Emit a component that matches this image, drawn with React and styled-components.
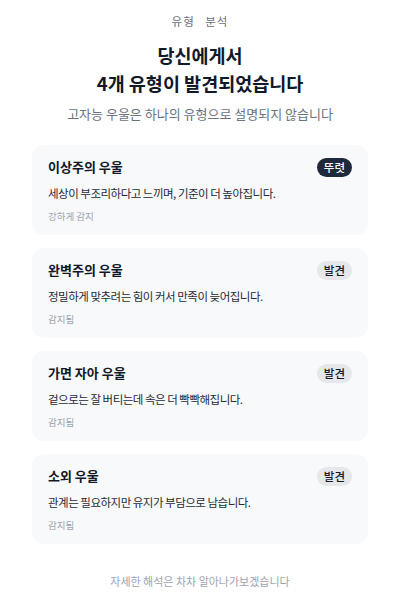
import React from "react";
import styled, { createGlobalStyle } from "styled-components";

const Global = createGlobalStyle`
  html, body { margin: 0; padding: 0; background: #ffffff; }
  body {
    font-family: "Noto Sans CJK KR", "Noto Sans", sans-serif;
    color: #111827;
  }
`;

const Page = styled.div`
  width: 400px;
  box-sizing: border-box;
  padding: 12px 32px 0;
  display: flex;
  flex-direction: column;
  align-items: center;
`;

const Eyebrow = styled.div`
  font-size: 11.5px;
  line-height: 18px;
  letter-spacing: 1px;
  word-spacing: 7px;
  color: #6b7280;
`;

const Title = styled.h1`
  margin: 11px 0 0;
  font-size: 18.5px;
  line-height: 28px;
  font-weight: 700;
  text-align: center;
  color: #111827;
`;

const Subtitle = styled.p`
  margin: 7px 0 0;
  font-size: 13px;
  line-height: 20px;
  color: #6b7280;
`;

const List = styled.div`
  margin-top: 21px;
  width: 100%;
  display: flex;
  flex-direction: column;
  gap: 13px;
`;

const Card = styled.div`
  background: #f8f9fb;
  border-radius: 12px;
  padding: 12px 16px;
  display: flex;
  flex-direction: column;
`;

const CardHead = styled.div`
  display: flex;
  align-items: center;
  justify-content: space-between;
  height: 20px;
`;

const CardTitle = styled.div`
  font-size: 13px;
  font-weight: 700;
  line-height: 20px;
  color: #111827;
`;

const Badge = styled.span`
  font-size: 11.5px;
  line-height: 19px;
  padding: 0 7px;
  border-radius: 10px;
  background: ${(p) => (p.$strong ? "#1e293b" : "#e5e7eb")};
  color: ${(p) => (p.$strong ? "#ffffff" : "#111827")};
  font-weight: 500;
`;

const Desc = styled.div`
  margin-top: 7px;
  font-size: 11.5px;
  letter-spacing: -0.5px;
  line-height: 18px;
  color: #1f2937;
`;

const Meta = styled.div`
  margin-top: 7px;
  font-size: 9.5px;
  line-height: 14px;
  color: #9ca3af;
`;

const Footer = styled.div`
  margin-top: 28px;
  font-size: 11px;
  line-height: 18px;
  color: #9ca3af;
`;

const types = [
  { name: "이상주의 우울", badge: "뚜렷", strong: true, desc: "세상이 부조리하다고 느끼며, 기준이 더 높아집니다.", meta: "강하게 감지" },
  { name: "완벽주의 우울", badge: "발견", desc: "정밀하게 맞추려는 힘이 커서 만족이 늦어집니다.", meta: "감지됨" },
  { name: "가면 자아 우울", badge: "발견", desc: "겉으로는 잘 버티는데 속은 더 빡빡해집니다.", meta: "감지됨" },
  { name: "소외 우울", badge: "발견", desc: "관계는 필요하지만 유지가 부담으로 남습니다.", meta: "감지됨" },
];

export default function App() {
  return (
    <>
      <Global />
      <Page>
        <Eyebrow>유형 분석</Eyebrow>
        <Title>
          당신에게서
          <br />
          4개 유형이 발견되었습니다
        </Title>
        <Subtitle>고자능 우울은 하나의 유형으로 설명되지 않습니다</Subtitle>
        <List>
          {types.map((t) => (
            <Card key={t.name}>
              <CardHead>
                <CardTitle>{t.name}</CardTitle>
                <Badge $strong={t.strong}>{t.badge}</Badge>
              </CardHead>
              <Desc>{t.desc}</Desc>
              <Meta>{t.meta}</Meta>
            </Card>
          ))}
        </List>
        <Footer>자세한 해석은 차차 알아나가보겠습니다</Footer>
      </Page>
    </>
  );
}
